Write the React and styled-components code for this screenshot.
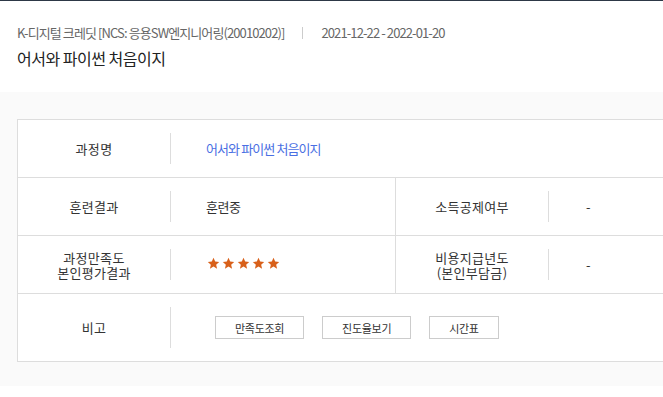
import React from 'react'
import styled, { createGlobalStyle } from 'styled-components'

const GlobalStyle = createGlobalStyle`
  html, body {
    margin: 0;
    padding: 0;
    background: #fff;
    overflow: hidden;
  }
  body {
    font-family: "Noto Sans CJK KR", "Noto Sans", sans-serif;
    color: #333;
  }
`

const Page = styled.div`
  width: 663px;
  border-top: 1px solid #2d3846;
`

const Header = styled.div`
  height: 91px;
  box-sizing: border-box;
  padding: 22px 17px 0;
`

const Meta = styled.div`
  display: flex;
  align-items: center;
  font-size: 13px;
  letter-spacing: -0.9px;
  color: #666;
  line-height: 20px;
`

const Sep = styled.span`
  width: 1px;
  height: 12px;
  background: #ccc;
  margin: 0 18px;
`

const Title = styled.div`
  margin-top: 3px;
  font-size: 16px;
  letter-spacing: -0.5px;
  color: #222;
  line-height: 24px;
`

const Band = styled.div`
  background: #fafafa;
  padding: 27px 0 24px 17px;
`

const Table = styled.div`
  width: 780px;
  border: 1px solid #ddd;
  border-right: none;
  background: #fff;
`

const Row = styled.div`
  display: flex;
  & + & {
    border-top: 1px solid #ddd;
  }
`

const Label = styled.div`
  width: 153px;
  flex: none;
  padding: 13px 0;
  border-left: ${p => (p.$left ? 'none' : '1px solid #ddd')};
`

const LabelInner = styled.div`
  height: 100%;
  min-height: 31px;
  box-sizing: border-box;
  border-right: 1px solid #ddd;
  display: flex;
  align-items: center;
  justify-content: center;
  text-align: center;
  font-size: 13px;
  letter-spacing: 0.3px;
  line-height: 15px;
  color: #333;
`

const Value = styled.div`
  width: ${p => p.$w || 'auto'};
  flex: ${p => (p.$w ? 'none' : '1')};
  box-sizing: border-box;
  display: flex;
  align-items: center;
  padding-left: ${p => p.$pl || 35}px;
  font-size: 13px;
  letter-spacing: ${p => (p.$link ? '-0.9px' : '-0.4px')};
  color: ${p => (p.$link ? '#4a6fe3' : '#333')};
`

const Stars = styled.div`
  display: flex;
  gap: 2px;
  margin: -2px 0 0 1px;
`

const Buttons = styled.div`
  display: flex;
  padding: 22px 0;
`

const Btn = styled.button`
  height: 23px;
  margin: 0 9px;
  padding: 0 19px;
  border: 1px solid #ccc;
  background: #fff;
  font-family: inherit;
  font-size: 11px;
  letter-spacing: -0.3px;
  color: #333;
  cursor: pointer;
`

const Star = () => (
  <svg width="13" height="13" viewBox="0 0 24 24">
    <path
      d="M12 1.5l3.1 6.9 7.4.7-5.6 5 1.7 7.4L12 17.7l-6.6 3.8 1.7-7.4-5.6-5 7.4-.7z"
      fill="#d8601a"
    />
  </svg>
)

export default function App() {
  return (
    <Page>
      <GlobalStyle />
      <Header>
        <Meta>
          <span>K-디지털 크레딧 [NCS: 응용SW엔지니어링(20010202)]</span>
          <Sep />
          <span>2021-12-22 - 2022-01-20</span>
        </Meta>
        <Title>어서와 파이썬 처음이지</Title>
      </Header>
      <Band>
        <Table>
          <Row>
            <Label $left><LabelInner>과정명</LabelInner></Label>
            <Value $link>어서와 파이썬 처음이지</Value>
          </Row>
          <Row>
            <Label $left><LabelInner>훈련결과</LabelInner></Label>
            <Value $w="224px">훈련중</Value>
            <Label><LabelInner>소득공제여부</LabelInner></Label>
            <Value $pl={37}>-</Value>
          </Row>
          <Row>
            <Label $left><LabelInner>과정만족도<br />본인평가결과</LabelInner></Label>
            <Value $w="224px">
              <Stars>
                {[0, 1, 2, 3, 4].map(i => <Star key={i} />)}
              </Stars>
            </Value>
            <Label><LabelInner>비용지급년도<br />(본인부담금)</LabelInner></Label>
            <Value $pl={37}>-</Value>
          </Row>
          <Row>
            <Label $left><LabelInner>비고</LabelInner></Label>
            <Value>
              <Buttons>
                <Btn>만족도조회</Btn>
                <Btn>진도율보기</Btn>
                <Btn>시간표</Btn>
              </Buttons>
            </Value>
          </Row>
        </Table>
      </Band>
    </Page>
  )
}
